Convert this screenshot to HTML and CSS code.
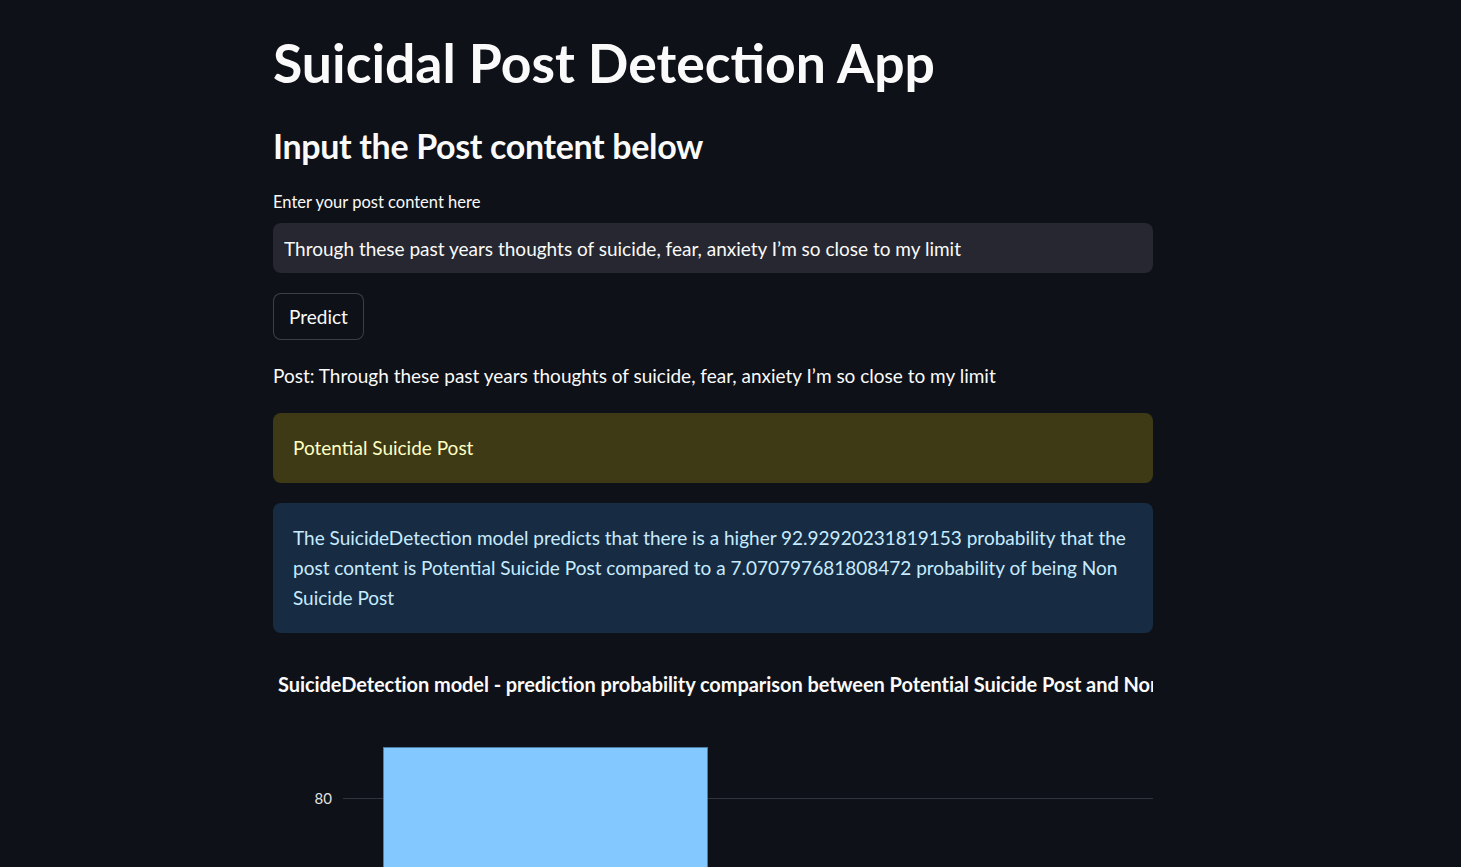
FILE: index.html
```html
<!DOCTYPE html>
<html lang="en">
<head>
<meta charset="utf-8">
<title>Suicidal Post Detection App</title>
<link rel="stylesheet" href="styles.css">
</head>
<body>
<main class="main">
  <h1 class="title">Suicidal Post Detection App</h1>
  <h2 class="subheader">Input the Post content below</h2>
  <label class="field-label" for="post">Enter your post content here</label>
  <div class="input-box">
    <input id="post" class="text-input" type="text" value="Through these past years thoughts of suicide, fear, anxiety I’m so close to my limit">
  </div>
  <button class="btn" type="button">Predict</button>
  <p class="post-line">Post: Through these past years thoughts of suicide, fear, anxiety I’m so close to my limit</p>
  <div class="alert alert-warning">Potential Suicide Post</div>
  <div class="alert alert-info">The SuicideDetection model predicts that there is a higher 92.92920231819153 probability that the post content is Potential Suicide Post compared to a 7.070797681808472 probability of being Non Suicide Post</div>
  <div class="chart">
    <svg class="chart-svg" width="880" height="320" viewBox="0 0 880 320">
      <text class="chart-title" x="5" y="39">SuicideDetection model - prediction probability comparison between Potential Suicide Post and Non Suicide Post</text>
      <line x1="70" y1="145.5" x2="880" y2="145.5" class="grid"/>
      <text class="tick" x="59" y="151" text-anchor="end">80</text>
      <rect x="110.5" y="94.5" width="324" height="260" class="bar"/>
    </svg>
  </div>
</main>
</body>
</html>
```
FILE: styles.css
```css
html, body {
  margin: 0;
  padding: 0;
  background: #0e1117;
}

body {
  color: #fafafa;
  font-family: "Lato", "Noto Sans", sans-serif;
  overflow: hidden;
}

.main {
  width: 880px;
  margin-left: 273px;
  padding-top: 29px;
  display: flex;
  flex-direction: column;
}

.title {
  margin: 0;
  font-size: 53.5px;
  line-height: 66px;
  font-weight: 700;
}

.subheader {
  margin: 29px 0 0 0;
  font-size: 34px;
  line-height: 43px;
  font-weight: 700;
  letter-spacing: -0.35px;
}

.field-label {
  margin-top: 25px;
  font-size: 16.5px;
  line-height: 21px;
  height: 21px;
}

.input-box {
  margin-top: 10px;
  height: 50px;
  background: #262730;
  border-radius: 8px;
  display: flex;
  align-items: center;
}

.text-input {
  flex: 1;
  background: transparent;
  border: 0;
  outline: none;
  color: #fafafa;
  font-family: inherit;
  font-size: 19px;
  padding: 0 11px;
}

.btn {
  align-self: flex-start;
  margin-top: 20px;
  height: 47px;
  padding: 0 15px;
  background: #0e1117;
  color: #fafafa;
  border: 1px solid rgba(250, 250, 250, 0.2);
  border-radius: 8px;
  font-family: inherit;
  font-size: 19px;
}

.post-line {
  margin: 21px 0 0 0;
  font-size: 19px;
  line-height: 30px;
}

.alert {
  border-radius: 8px;
  padding: 20px;
  font-size: 19px;
  line-height: 30px;
}

.alert-warning {
  margin-top: 22px;
  background: rgba(255, 227, 18, 0.2);
  color: #ffffc2;
}

.alert-info {
  margin-top: 20px;
  background: rgba(61, 157, 243, 0.2);
  color: #c7ebff;
}

.chart {
  margin-top: 20px;
}

.chart-svg {
  display: block;
  overflow: hidden;
}

.chart-title {
  fill: #fafafa;
  font-family: "Lato", "Noto Sans", sans-serif;
  font-size: 20px;
  font-weight: 700;
  letter-spacing: -0.07px;
}

.tick {
  fill: #e0e0e0;
  font-family: "Lato", "Noto Sans", sans-serif;
  font-size: 15px;
}

.grid {
  stroke: #31333f;
  stroke-width: 1;
}

.bar {
  fill: #83c9ff;
  stroke: #4d7ea6;
  stroke-width: 1;
}
```
